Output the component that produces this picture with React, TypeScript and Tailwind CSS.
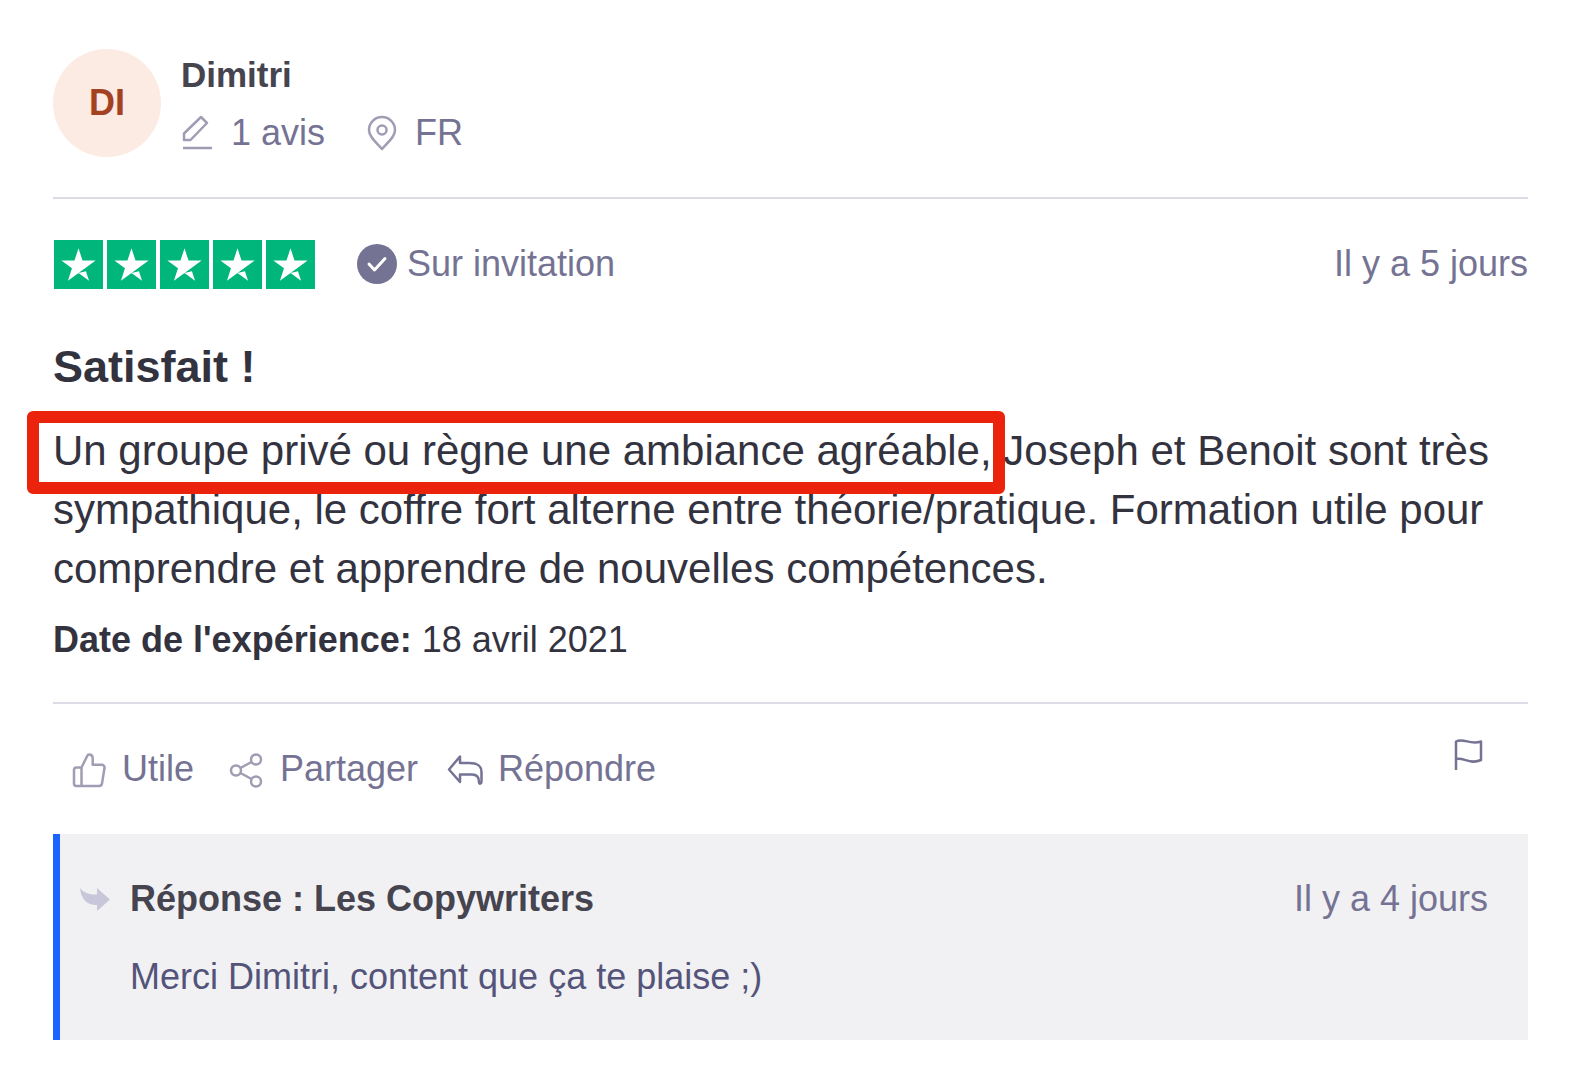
import type { ReactNode } from "react";

interface IconProps {
  children: ReactNode;
  className?: string;
}

function Icon({ children, className = "" }: IconProps) {
  return (
    <svg
      viewBox="0 -2 36 36"
      fill="none"
      stroke="currentColor"
      strokeWidth="2.5"
      strokeLinejoin="round"
      aria-hidden="true"
      className={`size-9 shrink-0 overflow-visible ${className}`}
    >
      {children}
    </svg>
  );
}

function Star() {
  return (
    <svg viewBox="0 0 96 96" aria-hidden="true" className="size-[49px]">
      <path fill="#00b67a" d="M0 0h96v96H0z" />
      <path
        fill="#fff"
        d="M48 64.7 62.6 61l6.1 18.8zM81.6 40.4H55.9L48 16.2l-7.9 24.2H14.4l20.8 15-7.9 24.2 20.8-15 12.8-9.2z"
      />
    </svg>
  );
}

const ACTIONS = [
  {
    label: "Utile",
    className: "w-[158px]",
    icon: (
      <g stroke="#9f9db3">
        <path d="M9.5 14.5h-5A2.5 2.5 0 0 0 2 17v13.5A2.5 2.5 0 0 0 4.5 33H27a3 3 0 0 0 3-2.5L32.5 15a2.8 2.8 0 0 0-2.8-3.3h-9V5.500c0-2.500-1.500-4-3.600-4-1 0-1.500.5-1.800 1.300z" />
        <path d="M9.5 14.5V33" />
      </g>
    ),
  },
  {
    label: "Partager",
    className: "w-[218px]",
    icon: (
      <g stroke="#9f9db3">
        <circle cx="6" cy="17.5" r="5" />
        <circle cx="26" cy="6.5" r="5" />
        <circle cx="26" cy="28.5" r="5" />
        <path d="m10.5 15 11-6M10.5 20l11 6" />
      </g>
    ),
  },
  {
    label: "Répondre",
    className: "",
    icon: (
      <path d="M1 16.5 12 3.5V10h9c8 0 12.500 2 12.500 9v9.500c0 2.500-2.500 3-2.500.500 0-5-2-7.500-7-7.500H12V29z" />
    ),
  },
];

function Consumer() {
  return (
    <header className="flex items-center gap-5 border-b-2 border-[#dcdce6] pb-10">
      <div className="flex size-[108px] shrink-0 items-center justify-center rounded-full bg-[#fcebe3] text-[36px] font-bold text-[#a34123]">
        DI
      </div>
      <div className="flex flex-col gap-3 pt-0.5">
        <a href="#profil" className="text-[35px] leading-[46px] font-bold text-[#45444f]">
          Dimitri
        </a>
        <div className="flex gap-10 text-[36px] leading-[46px] text-[#757393]">
          <span className="flex items-center gap-3.5">
            <Icon className="text-[#9f9db3]">
              <path d="M3 23v-6.5L20 0l6 6L9.5 23zM2 31h29" />
            </Icon>
            1 avis
          </span>
          <span className="flex items-center gap-3.5">
            <Icon className="text-[#9f9db3]">
              <path d="M17 32C12 26 4 20.500 4 13a13 13 0 0 1 26 0C30 20.500 22 26 17 32z" />
              <circle cx="17" cy="13" r="4.5" />
            </Icon>
            FR
          </span>
        </div>
      </div>
    </header>
  );
}

function Reply() {
  return (
    <section className="border-l-[7px] border-[#1c64ff] bg-[#f1f1f4] pt-10 pr-10 pb-[38px] pl-5">
      <div className="flex items-center text-[36px] leading-[50px]">
        <svg viewBox="0 0 30 24" aria-hidden="true" className="mr-5 h-6 w-[30px] shrink-0">
          <path fill="#c8c7d9" d="M0 1c4 5 9 6.500 17 6.500V1l13 11.500L17 24v-6C7 18.500 1 12 0 1z" />
        </svg>
        <h3 className="font-bold text-[#45444f]">Réponse : Les Copywriters</h3>
        <time className="ml-auto text-[#757393]">Il y a 4 jours</time>
      </div>
      <p className="mt-7 pl-[50px] text-[36px] leading-[50px] text-[#54547a]">
        Merci Dimitri, content que ça te plaise ;)
      </p>
    </section>
  );
}

export default function App() {
  return (
    <main className="min-h-screen bg-white font-['Liberation_Sans',Arial,sans-serif]">
      <article className="pt-[49px] pr-14 pb-12 pl-[53px]">
        <Consumer />

        <div className="mt-10 flex items-center text-[36px] leading-[50px] text-[#757393]">
          <div role="img" aria-label="Noté 5 sur 5" className="flex gap-1 pl-px">
            {[1, 2, 3, 4, 5].map((n) => (
              <Star key={n} />
            ))}
          </div>
          <svg viewBox="0 0 40 40" aria-hidden="true" className="mr-2.5 ml-[42px] size-10">
            <circle cx="20" cy="20" r="20" fill="#757393" />
            <path
              d="m12 20 5.500 6L28 14.500"
              fill="none"
              stroke="#fff"
              strokeWidth="3"
              strokeLinecap="round"
              strokeLinejoin="round"
            />
          </svg>
          <span>Sur invitation</span>
          <time className="ml-auto">Il y a 5 jours</time>
        </div>

        <h2 className="mt-12 text-[45px] leading-[60px] font-bold text-[#33333f]">Satisfait !</h2>
        <p className="mt-6 text-[42px] leading-[59px] text-[#33333f]">
          <span className="relative">
            Un groupe privé ou règne une ambiance agréable,
            {/* highlight frame around the quoted words */}
            <span className="absolute -top-4 -right-[13px] -bottom-5 -left-[26px] rounded-md border-12 border-[#ec230c]" />
          </span>{" "}
          Joseph et Benoit sont très sympathique, le coffre fort alterne entre théorie/pratique.
          Formation utile pour comprendre et apprendre de nouvelles compétences.
        </p>
        <p className="mt-4 text-[36px] leading-[52px] text-[#33333f]">
          <b>Date de l'expérience:</b> 18 avril 2021
        </p>

        <div className="mt-9 flex items-start border-t-2 border-[#dcdce6] pt-8 pl-[19px] text-[#757393]">
          {ACTIONS.map(({ label, className, icon }) => (
            <button
              key={label}
              type="button"
              className={`mt-2 flex items-center gap-3.5 text-[36px] leading-[50px] ${className}`}
            >
              <Icon>{icon}</Icon>
              {label}
            </button>
          ))}
          <button type="button" aria-label="Signaler" className="mr-10 ml-auto">
            <Icon>
              <path d="M4 32V3.500c8-4 14 4 25 0V22c-11 5-17-3-25-1" />
            </Icon>
          </button>
        </div>

        <div className="mt-10">
          <Reply />
        </div>
      </article>
    </main>
  );
}
